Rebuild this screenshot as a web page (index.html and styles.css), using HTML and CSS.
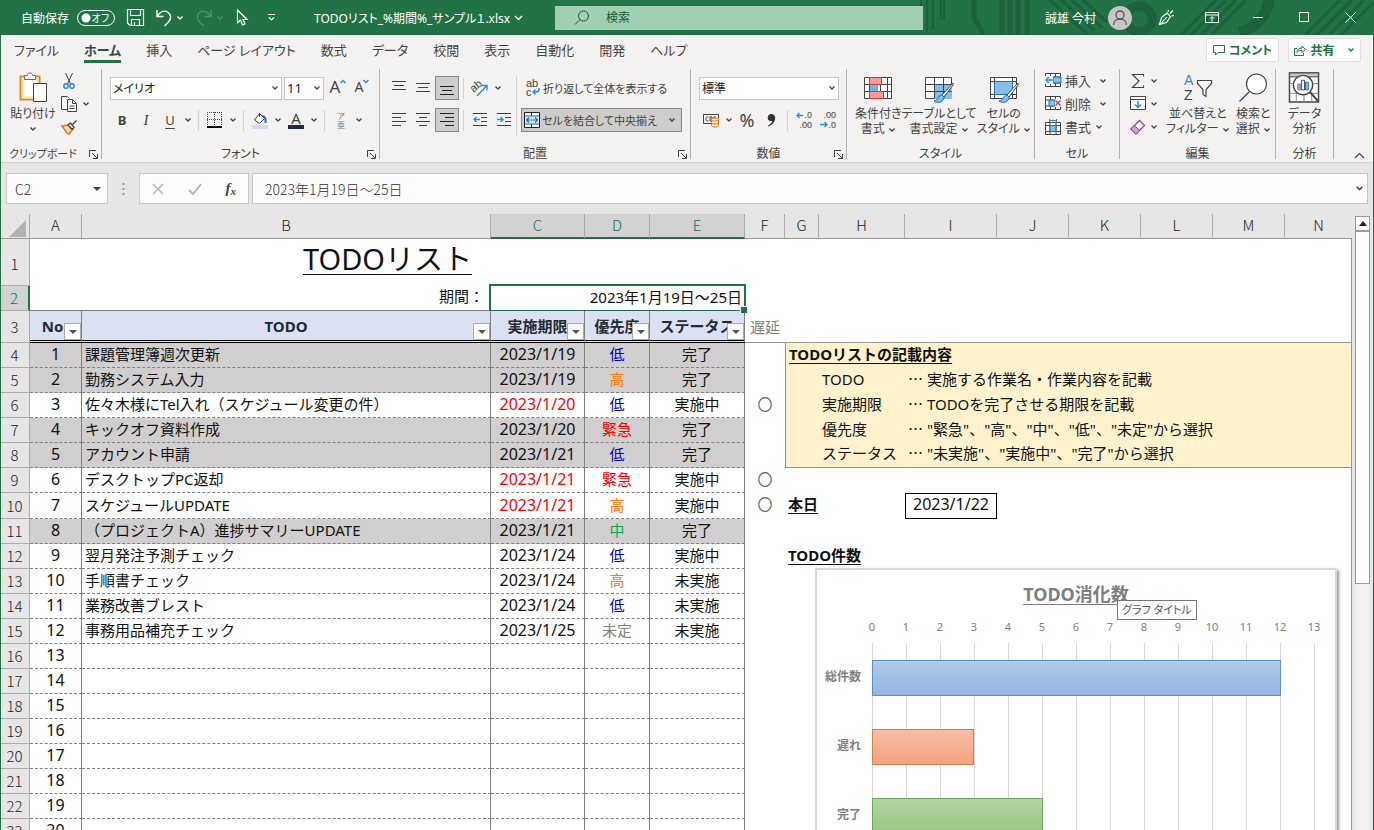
FILE: index.html
```
<!DOCTYPE html>
<html lang="ja">

<head>
    <meta charset="utf-8">
    <title>TODOリスト_%期間%_サンプル１.xlsx</title>
    <meta name="viewport" content="width=device-width, initial-scale=1.0">
    <link rel="stylesheet" href="styles.css">
</head>

<body>
    <!-- shared symbols -->
    <svg class="defs" width="0" height="0">
        <symbol id="chev" viewBox="0 0 8 8"><path d="M1.500 2.500 4 5 6.500 2.500" fill="none" stroke="currentColor" stroke-width="1.3"/></symbol>
        <symbol id="launch" viewBox="0 0 9 9"><path d="M.5 7V.5H7M3 3l5 5M8.500 4v4.500H4" fill="none" stroke="currentColor"/></symbol>
        <symbol id="down" viewBox="0 0 8 8"><path d="M0 2h8L4 6z" fill="currentColor"/></symbol>
    </svg>

    <div class="window">
        <header class="titlebar">
            <svg class="deco" width="454" height="35" viewBox="0 0 454 35">
                <g fill="none" stroke="#1c613b">
                    <path d="M2 0v30M8 0v30M14 0v30M22 0v20M25 0v20" stroke-width="2"/>
                    <path d="M55 0v18l8 14v3M83 0v35M91 0v35M99 0v35M108 0v35" stroke-width="5"/>
                    <path d="M131 0l38 35M142 0l34 31M153 0l30 28M164 0l24 22" stroke-width="3"/>
                    <circle cx="220" cy="19" r="13" stroke-width="9"/>
                    <path d="M262 35l35-35M272 35l35-35M282 35l35-35M292 35l35-35" stroke-width="3"/>
                    <path d="M350 0a38 38 0 0 1-30 32" stroke-width="11"/>
                    <path d="M386 35l35-35M398 35l35-35M410 35l35-35M422 35l32-32" stroke-width="3"/>
                </g>
            </svg>
            <div class="quick">
                <label for="autosave">自動保存</label>
                <span class="switch"><input type="checkbox" id="autosave"><span>オフ</span></span>
                <button class="q-save" aria-label="上書き保存"><svg width="17" height="17" viewBox="0 0 17 17"><path d="M.5.5h16v16H3L.5 14zM3.500.5v6h10v-6M4.500 16.500v-6h8v6M7.500 16v-3" fill="none" stroke="#fff" stroke-width="1.2"/></svg></button>
                <button class="q-undo" aria-label="元に戻す"><svg width="17" height="18" viewBox="0 0 17 18"><path d="M1 1v6.500h6.500M1.500 7C4 3 8 1 11.500 3c4 2.500 4 7 1 10l-4 4" fill="none" stroke="#fff" stroke-width="1.4"/></svg><svg class="chev"><use href="#chev"/></svg></button>
                <button class="q-redo" aria-label="やり直し"><svg width="17" height="18" viewBox="0 0 17 18"><path d="M15 1v6.500H8.500M14.500 7C12 3 8 1 4.500 3c-4 2.500-4 7-1 10l4 4" fill="none" stroke="currentColor" stroke-width="1.4"/></svg><svg class="chev"><use href="#chev"/></svg></button>
                <button class="q-touch" aria-label="タッチ/マウス モード"><svg width="12" height="17" viewBox="0 0 12 17"><path d="M1.500 1v13l3-3 2 5 2.500-1-2-4.500H11z" fill="none" stroke="#fff" stroke-width="1.2"/></svg></button>
                <button aria-label="カスタマイズ"><svg width="9" height="8" viewBox="0 0 9 8"><path d="M1 .5h7M2 3.500l2.500 2.500L7 3.500" fill="none" stroke="#fff" stroke-width="1.2"/></svg></button>
            </div>
            <button class="filename">TODOリスト_%期間%_サンプル１.xlsx <svg width="9" height="8" viewBox="0 0 8 8"><path d="M.5 2 4 5.500 7.500 2" fill="none" stroke="#fff" stroke-width="1.5"/></svg></button>
            <div class="search">
                <svg width="16" height="16" viewBox="0 0 16 16"><circle cx="9.500" cy="6" r="5" fill="none" stroke="#185c37"/><path d="M6 9.500 1 14.500" stroke="#185c37"/></svg>
                <input type="text" aria-label="検索" placeholder="検索">
            </div>
            <div class="account">
                <span>誠雄 今村</span>
                <svg width="24" height="24" viewBox="0 0 24 24"><circle cx="12" cy="12" r="12" fill="#c8c6c4"/><circle cx="12" cy="9" r="4" fill="none" stroke="#555" stroke-width="1.3"/><path d="M5.500 19c0-8 13-8 13 0" fill="none" stroke="#555" stroke-width="1.3"/></svg>
            </div>
            <div class="winbtns">
                <button aria-label="新機能"><svg width="17" height="17" viewBox="0 0 17 17"><path d="M1.500 15.500 3.500 8.500 9 4l3.500 3.500-4 6zM1.500 15.500l2-1.500 2.500.5M3.500 14 9 8M10 3l.5-2M12 4.500l3-3M13.500 7l2.500-.5" fill="none" stroke="#fff" stroke-width="1.1"/></svg></button>
                <button aria-label="リボンの表示オプション"><svg width="14" height="12" viewBox="0 0 14 12"><path d="M.5.5h13v10H.5zM.5 3h13M7 9.500V5M5 6.500l2-2 2 2" fill="none" stroke="#fff"/></svg></button>
                <button aria-label="最小化"><svg width="11" height="11"><path d="M0 5.500h10" stroke="#fff"/></svg></button>
                <button aria-label="最大化"><svg width="11" height="11"><path d="M.5.5h9v9h-9z" fill="none" stroke="#fff"/></svg></button>
                <button aria-label="閉じる"><svg width="11" height="11"><path d="M.5.5l10 10M10.500.5l-10 10" stroke="#fff"/></svg></button>
            </div>
        </header>

        <nav class="tabs">
            <button>ファイル</button>
            <button class="active">ホーム</button>
            <button>挿入</button>
            <button>ページ レイアウト</button>
            <button>数式</button>
            <button>データ</button>
            <button>校閲</button>
            <button>表示</button>
            <button>自動化</button>
            <button>開発</button>
            <button>ヘルプ</button>
            <div class="tab-actions">
                <button class="action"><svg width="12" height="12" viewBox="0 0 12 12"><path d="M.5 1.500h11v7H5L2.500 11V8.500h-2z" fill="none" stroke="#217346"/></svg>コメント</button>
                <button class="action share"><svg width="12" height="12" viewBox="0 0 12 12"><path d="M3 4.500H.5v7h9V9M3 8.500c0-3 2-4.500 5-4.500V2l3.500 3.500L8 8.500v-2c-2 0-4 0-5 2z" fill="none" stroke="#217346"/></svg>共有<svg class="chev"><use href="#chev"/></svg></button>
            </div>
        </nav>

        <section class="ribbon">
            <div class="group g-clip">
                <div class="body low">
                    <button class="big">
                        <svg width="28" height="31" viewBox="0 0 28 31"><path d="M1.500 4.500h19v23h-19z" fill="#fff" stroke="#e08a1e" stroke-width="2"/><path d="M3.500 6.500h15v19h-15z" fill="#fff" stroke="#fbd9a8" stroke-width="2"/><path d="M5.500 7.500V3.500h3c0-3.500 5-3.500 5 0h3v4z" fill="#fff" stroke="#666"/><path d="M14.500 11.500h13v18h-13z" fill="#fff" stroke="#444"/></svg>
                        <span>貼り付け</span>
                        <svg class="chev"><use href="#chev"/></svg>
                    </button>
                    <div class="stack">
                        <button aria-label="切り取り"><svg width="16" height="18" viewBox="0 0 16 18"><path d="M4.500 1l5 11M11.500 1l-5 11" stroke="#444" fill="none"/><circle cx="5" cy="14" r="2.200" fill="none" stroke="#2b88d8" stroke-width="1.400"/><circle cx="11" cy="14" r="2.200" fill="none" stroke="#2b88d8" stroke-width="1.400"/></svg></button>
                        <button aria-label="コピー"><svg width="16" height="16" viewBox="0 0 16 16"><path d="M6 13.500H.5V.5h6l2 2" fill="#fff" stroke="#444"/><path d="M6.500 3.500h5l4 4v8h-9zM11.500 3.500v4h4M8.500 10h5M8.500 12.500h5" fill="#fff" stroke="#444"/></svg><svg class="chev"><use href="#chev"/></svg></button>
                        <button aria-label="書式のコピー"><svg width="17" height="16" viewBox="0 0 17 16"><path d="M1 7l6-1 4 5-3 4-2-1z" fill="#fbdcb5" stroke="#e07a10" stroke-width="1.500"/><path d="M7 6l4.500 4.500L13 8.500 9.500 4zM11 6l4.500-4.500" fill="#fff" stroke="#444" stroke-width="1.300"/></svg></button>
                    </div>
                </div>
                <footer>クリップボード<svg class="launch"><use href="#launch"/></svg></footer>
            </div>

            <div class="group g-font">
                <div class="body rows">
                    <div class="row">
                        <select aria-label="フォント"><option>メイリオ</option></select>
                        <select class="size" aria-label="フォント サイズ"><option>11</option></select>
                        <button class="ic fa" aria-label="フォント サイズの拡大">A<svg width="6" height="5"><path d="M.5 4 3 1.500 5.500 4" fill="none" stroke="#2b88d8" stroke-width="1.300"/></svg></button>
                        <button class="ic fa small" aria-label="フォント サイズの縮小">A<svg width="6" height="5"><path d="M.5 1 3 3.500 5.500 1" fill="none" stroke="#2b88d8" stroke-width="1.300"/></svg></button>
                    </div>
                    <div class="row">
                        <button class="ic bold">B</button>
                        <button class="ic ital">I</button>
                        <button class="ic under">U</button>
                        <button class="drop" aria-label="下線"><svg class="chev"><use href="#chev"/></svg></button>
                        <i class="sep"></i>
                        <button class="ic" aria-label="罫線"><svg width="16" height="16" viewBox="0 0 16 16"><path d="M0 .5h16M0 7.500h16M.5 0v15M7.500 0v15M14.500 0v15" stroke="#444" stroke-dasharray="1 1"/><path d="M0 15h15" stroke="#000" stroke-width="2"/></svg></button>
                        <button class="drop" aria-label="罫線の種類"><svg class="chev"><use href="#chev"/></svg></button>
                        <i class="sep"></i>
                        <button class="ic" aria-label="塗りつぶしの色"><svg width="17" height="17" viewBox="0 0 17 17"><path d="M7.500 1.500l5 5-5 5-5-3.500zM7.500 1v4" fill="#fff" stroke="#444"/><path d="M10 4c3 0 4 3 3.500 7" fill="none" stroke="#1e6fb8" stroke-width="2"/><path d="M0 13h16v4H0z" fill="#cfdcec"/></svg></button>
                        <button class="drop" aria-label="塗りつぶしの色を選択"><svg class="chev"><use href="#chev"/></svg></button>
                        <button class="ic color" aria-label="フォントの色">A</button>
                        <button class="drop" aria-label="フォントの色を選択"><svg class="chev"><use href="#chev"/></svg></button>
                        <i class="sep"></i>
                        <button class="ic ruby" aria-label="ふりがな"><span>ア</span><span>亜</span></button>
                        <button class="drop" aria-label="ふりがなの設定"><svg class="chev"><use href="#chev"/></svg></button>
                    </div>
                </div>
                <footer>フォント<svg class="launch"><use href="#launch"/></svg></footer>
            </div>

            <div class="group g-align">
                <div class="body">
                    <div class="rows aligns">
                        <div class="row">
                            <button class="ic" aria-label="上揃え"><svg width="15" height="16"><path d="M0 1.500h14M2 5.500h10M0 9.500h14" stroke="#444"/></svg></button>
                            <button class="ic" aria-label="上下中央揃え"><svg width="15" height="16"><path d="M0 3.500h14M2 7.500h10M0 11.500h14" stroke="#444"/></svg></button>
                            <button class="ic on" aria-label="下揃え"><svg width="15" height="16"><path d="M0 6.500h14M2 10.500h10M0 14.500h14" stroke="#222"/></svg></button>
                            <i class="sep"></i>
                            <button class="ic" aria-label="方向"><svg width="18" height="17" viewBox="0 0 18 17"><text x="0" y="10" font-size="11" transform="rotate(-40 5 8)" fill="#444">ab</text><path d="M6 16 15.500 6M11 5.500h5v5" fill="none" stroke="#2b88d8" stroke-width="1.400"/></svg></button>
                            <button class="drop" aria-label="方向の種類"><svg class="chev"><use href="#chev"/></svg></button>
                        </div>
                        <div class="row">
                            <button class="ic" aria-label="左揃え"><svg width="15" height="16"><path d="M0 1.500h14M0 5.500h9M0 9.500h14M0 13.500h9" stroke="#444"/></svg></button>
                            <button class="ic" aria-label="中央揃え"><svg width="15" height="16"><path d="M0 1.500h14M3 5.500h8M0 9.500h14M3 13.500h8" stroke="#444"/></svg></button>
                            <button class="ic on" aria-label="右揃え"><svg width="15" height="16"><path d="M0 1.500h14M5 5.500h9M0 9.500h14M5 13.500h9" stroke="#222"/></svg></button>
                            <i class="sep"></i>
                            <button class="ic" aria-label="インデントを減らす"><svg width="15" height="16"><path d="M0 1.500h14M8 5.500h6M8 9.500h6M0 13.500h14" stroke="#444"/><path d="M7 7.500H1M3.500 5 1 7.500 3.500 10" fill="none" stroke="#2b88d8" stroke-width="1.300"/></svg></button>
                            <button class="ic" aria-label="インデントを増やす"><svg width="15" height="16"><path d="M0 1.500h14M8 5.500h6M8 9.500h6M0 13.500h14" stroke="#444"/><path d="M0 7.500h6M3.500 5 6 7.500 3.500 10" fill="none" stroke="#2b88d8" stroke-width="1.300"/></svg></button>
                        </div>
                    </div>
                    <i class="sep tall"></i>
                    <div class="rows">
                        <button class="wide"><svg width="15" height="18" viewBox="0 0 15 18"><text x="0" y="8" font-size="11" fill="#444">ab</text><text x="0" y="17" font-size="11" fill="#444">c</text><path d="M13 9v2c0 2-2 2-6 2M9.500 10.500 7 13l2.500 2.500" fill="none" stroke="#2b88d8" stroke-width="1.400"/></svg>折り返して全体を表示する</button>
                        <button class="wide on"><svg width="16" height="16" viewBox="0 0 16 16"><path d="M.5.5h15v15H.5zM7.500.5v4M7.500 11.500v4" fill="#fff" stroke="#222"/><path d="M1 4h14v8H1z" fill="#d6e9fa"/><path d="M.5 4h15M.5 12h15M2.500 8h11M5 5.500 2.500 8 5 10.500M11 5.500 13.500 8 11 10.500" fill="none" stroke="#1e6fb8" stroke-width="1.200"/></svg>セルを結合して中央揃え<svg class="chev"><use href="#chev"/></svg></button>
                    </div>
                </div>
                <footer>配置<svg class="launch"><use href="#launch"/></svg></footer>
            </div>

            <div class="group g-num">
                <div class="body rows">
                    <div class="row"><select aria-label="表示形式"><option>標準</option></select></div>
                    <div class="row">
                        <button class="ic" aria-label="通貨表示形式"><svg width="17" height="16" viewBox="0 0 17 16"><path d="M9 11.500H.5v-9h15V6" fill="none" stroke="#444"/><path d="M5.500 5C2 4 2 10 5.500 9M7 5v4h2V5zM11 9V5h2" fill="none" stroke="#444"/><path d="M8.500 7.500c0-2 7-2 7 0v6c0 2-7 2-7 0z" fill="#fbe3c6" stroke="#e07a10"/><path d="M8.500 7.500c0 2 7 2 7 0M8.500 10.500c0 2 7 2 7 0" fill="none" stroke="#e07a10"/></svg></button>
                        <button class="drop" aria-label="通貨の種類"><svg class="chev"><use href="#chev"/></svg></button>
                        <button class="ic pct">%</button>
                        <button class="ic comma" aria-label="桁区切りスタイル"><svg width="9" height="13" viewBox="0 0 9 13"><path d="M4 0c6 0 6 9-2.500 12.500L1 11.500c3-1.500 4-3 4-4.500C-1 8 0 0 4 0z" fill="#333"/></svg></button>
                        <i class="sep"></i>
                        <button class="ic" aria-label="小数点以下の表示桁数を増やす"><svg width="17" height="18" viewBox="0 0 17 18"><text x="16" y="7" font-size="9" text-anchor="end" fill="#444">.0</text><text x="16" y="17" font-size="9" text-anchor="end" fill="#444">.00</text><path d="M7 4.500H1M3.500 2 1 4.500 3.500 7" fill="none" stroke="#2b88d8" stroke-width="1.300"/></svg></button>
                        <button class="ic" aria-label="小数点以下の表示桁数を減らす"><svg width="17" height="18" viewBox="0 0 17 18"><text x="16" y="7" font-size="9" text-anchor="end" fill="#444">.00</text><text x="16" y="17" font-size="9" text-anchor="end" fill="#444">.0</text><path d="M0 13.500h7M4.500 11 7 13.500 4.500 16" fill="none" stroke="#2b88d8" stroke-width="1.300"/></svg></button>
                    </div>
                </div>
                <footer>数値<svg class="launch"><use href="#launch"/></svg></footer>
            </div>

            <div class="group g-style">
                <div class="body low">
                    <button class="big">
                        <svg width="30" height="31" viewBox="0 0 30 31"><path d="M1.500 5.500h27v21h-27zM1.500 12.500h27M1.500 19.500h27M6.500 5.500v21M24.500 5.500v21M17.500 5.500v21" fill="#fff" stroke="#444"/><path d="M6.500 5.500h12v7h-12zM6.500 19.500h14v7h-14z" fill="#ff9a9a" stroke="#e03030"/><path d="M7 13h8v6H7z" fill="#6cb4ee"/></svg>
                        <span>条件付き<br>書式 <svg class="chev"><use href="#chev"/></svg></span>
                    </button>
                    <button class="big">
                        <svg width="30" height="31" viewBox="0 0 30 31"><path d="M1.500 5.500h26v21h-26z" fill="#fff" stroke="#444"/><path d="M10 12h18v15H10z" fill="#83beec"/><path d="M1.500 12.500h26M1.500 19.500h26M10.500 5.500v21M19.500 5.500v21" stroke="#444"/><path d="M29 11 18 23l2 2 9-12z" fill="#fff" stroke="#444"/><path d="M18 23c-4 0-3 5-8 6 4 3 10 1 10-4z" fill="#83beec" stroke="#1e6fb8"/></svg>
                        <span>テーブルとして<br>書式設定 <svg class="chev"><use href="#chev"/></svg></span>
                    </button>
                    <button class="big">
                        <svg width="30" height="31" viewBox="0 0 30 31"><path d="M1.500 5.500h26v21h-26zM1.500 9.500h26M5.500 5.500v21M23.500 5.500v21M1.500 22.500h26" fill="#fff" stroke="#444"/><path d="M5.500 9.500h18v13h-18z" fill="#83beec" stroke="#1e6fb8"/><path d="M29 11 18 23l2 2 9-12z" fill="#fff" stroke="#444"/><path d="M18 23c-4 0-3 5-8 6 4 3 10 1 10-4z" fill="#83beec" stroke="#1e6fb8"/></svg>
                        <span>セルの<br>スタイル <svg class="chev"><use href="#chev"/></svg></span>
                    </button>
                </div>
                <footer>スタイル</footer>
            </div>

            <div class="group g-cell">
                <div class="body low">
                    <div class="stack">
                        <button><svg width="16" height="15" viewBox="0 0 16 15"><path d="M.5.5h15v13H.5zM.5 4h15M.5 10h15M5.500 0v14M10.500 0v14" fill="#fff" stroke="#444"/><path d="M8 4h8v6H8z" fill="#83beec" stroke="#1e6fb8"/><path d="M0 3h8v8H0z" fill="#f3f2f1"/><path d="M8 7H1M4 4 1 7l3 3" fill="none" stroke="#2b88d8" stroke-width="1.300"/></svg>挿入<svg class="chev far"><use href="#chev"/></svg></button>
                        <button><svg width="16" height="15" viewBox="0 0 16 15"><path d="M.5.5h15v13H.5zM.5 4h15M.5 10h15M5.500 0v14M10.500 0v14" fill="#fff" stroke="#444"/><path d="M4 4h6v6H4z" fill="#83beec" stroke="#1e6fb8"/><path d="M10 3h6v8h-6z" fill="#f3f2f1"/><path d="M10.500 4.500l5 5M15.500 4.500l-5 5" stroke="#e03030" stroke-width="1.300"/></svg>削除<svg class="chev far"><use href="#chev"/></svg></button>
                        <button><svg width="16" height="16" viewBox="0 0 16 16"><path d="M.5 3.500h15v12H.5zM.5 6.500h15M.5 12.500h15M5 3v12M11 3v12" fill="#fff" stroke="#444"/><path d="M5 6.500h6v6H5z" fill="#83beec" stroke="#1e6fb8"/><path d="M4.500 1.500h7M4.500 0v3M11.500 0v3" stroke="#2b88d8"/></svg>書式<svg class="chev"><use href="#chev"/></svg></button>
                    </div>
                </div>
                <footer>セル</footer>
            </div>

            <div class="group g-edit">
                <div class="body low">
                    <div class="stack">
                        <button aria-label="オート SUM"><svg width="16" height="16" viewBox="0 0 16 16"><path d="M13.500 3.500v-2h-11L9 8l-6.500 6.500h11v-2" fill="none" stroke="#444" stroke-width="1.200"/></svg><svg class="chev"><use href="#chev"/></svg></button>
                        <button aria-label="フィル"><svg width="16" height="15" viewBox="0 0 16 15"><path d="M.5.5h15v13H.5zM.5 3.500h15" fill="#fff" stroke="#444"/><path d="M8 5v6.500M5 8.500l3 3 3-3" fill="none" stroke="#2b88d8" stroke-width="1.400"/></svg><svg class="chev"><use href="#chev"/></svg></button>
                        <button aria-label="クリア"><svg width="16" height="16" viewBox="0 0 16 16"><path d="M1 10 9.500 1.500l5 5L6 15z" fill="#fff" stroke="#9b3fa8" stroke-width="1.300"/><path d="M1 10l3.500-3.500 5 5L6 15z" fill="#d79be0" stroke="#9b3fa8"/></svg><svg class="chev"><use href="#chev"/></svg></button>
                    </div>
                    <button class="big">
                        <svg width="30" height="31" viewBox="0 0 30 31"><text x="1" y="13" font-size="14" fill="#2b88d8">A</text><text x="1" y="28" font-size="14" fill="#444">Z</text><path d="M14.500 8.500h14v3l-5.500 6v7l-3-2v-5l-5.500-6z" fill="#fff" stroke="#444" stroke-width="1.200"/></svg>
                        <span>並べ替えと<br>フィルター <svg class="chev"><use href="#chev"/></svg></span>
                    </button>
                    <button class="big">
                        <svg width="30" height="31" viewBox="0 0 30 31"><circle cx="18.500" cy="12" r="10" fill="#fff" stroke="#444" stroke-width="1.200"/><path d="M11.500 19.500 1.500 29.500" stroke="#444" stroke-width="1.300"/></svg>
                        <span>検索と<br>選択 <svg class="chev"><use href="#chev"/></svg></span>
                    </button>
                </div>
                <footer>編集</footer>
            </div>

            <div class="group g-ana">
                <div class="body low">
                    <button class="big">
                        <svg width="32" height="31" viewBox="0 0 32 32"><path d="M1 1h30v30H1z" fill="#fff" stroke="#444" stroke-width="1.500"/><path d="M1 1h30v4H1z" fill="#c8c6c4" stroke="#444"/><path d="M1 12h30M1 22h30M8 22v9M16 22v9M24 22v9" stroke="#888"/><circle cx="15" cy="13.500" r="10" fill="#fff" stroke="#444" stroke-width="1.500"/><path d="M22.500 21l8 9" stroke="#444" stroke-width="2"/><path d="M9.500 12.500h3v6h-3z" fill="#aaa" stroke="#888"/><path d="M13.500 8.500h3v10h-3z" fill="#fff" stroke="#444"/><path d="M17.500 10.500h3v8h-3z" fill="#83beec" stroke="#1e6fb8"/></svg>
                        <span>データ<br>分析</span>
                    </button>
                </div>
                <footer>分析</footer>
            </div>
            <button class="collapse" aria-label="リボンを折りたたむ"><svg width="11" height="7" viewBox="0 0 11 7"><path d="M1 6l4.500-4.500L10 6" fill="none" stroke="#444" stroke-width="1.200"/></svg></button>
        </section>

        <section class="formulabar">
            <div class="namebox"><input type="text" value="C2" aria-label="名前ボックス"><svg width="8" height="8"><use href="#down"/></svg></div>
            <svg class="grip" width="3" height="12"><path d="M1.500 0v12" stroke="#999" stroke-width="2" stroke-dasharray="2 3"/></svg>
            <div class="fx">
                <button aria-label="キャンセル"><svg width="12" height="12"><path d="M1 1l10 10M11 1 1 11" stroke="#b5b5b5" stroke-width="1.500"/></svg></button>
                <button aria-label="入力"><svg width="14" height="12"><path d="M1 7l4 4 8-10" fill="none" stroke="#b5b5b5" stroke-width="2"/></svg></button>
                <button class="fn" aria-label="関数の挿入">f<small>x</small></button>
            </div>
            <div class="formula"><input type="text" value="2023年1月19日～25日" aria-label="数式バー"><svg width="9" height="9"><use href="#chev"/></svg></div>
        </section>

        <main class="workarea">
            <div class="sheet">
                <table>
                    <colgroup>
                        <col class="c-row"><col class="c-a"><col class="c-b"><col class="c-c"><col class="c-d"><col class="c-e"><col class="c-f"><col class="c-g"><col class="c-h"><col class="c-i"><col class="c-j"><col class="c-j"><col class="c-j"><col class="c-j"><col>
                    </colgroup>
                    <thead>
                        <tr>
                            <th class="corner"><svg width="18" height="17"><path d="M17 0v17H0z" fill="#b2b2b2"/></svg></th>
                            <th>A</th><th>B</th><th class="sel">C</th><th class="sel">D</th><th class="sel">E</th><th>F</th><th>G</th><th>H</th><th>I</th><th>J</th><th>K</th><th>L</th><th>M</th><th>N</th>
                        </tr>
                    </thead>
                    <tbody class="top">
                        <tr class="r1"><th>1</th><td colspan="5" class="title">TODOリスト</td><td colspan="9"></td></tr>
                        <tr class="r2"><th class="sel">2</th><td></td><td class="period">期間：</td><td colspan="3" class="selected">2023年1月19日～25日</td><td colspan="9"></td></tr>
                        <tr class="r3">
                            <th>3</th>
                            <td class="no">No<button class="filter" aria-label="No フィルター"><svg width="8" height="8"><use href="#down"/></svg></button></td>
                            <td>TODO<button class="filter" aria-label="TODO フィルター"><svg width="8" height="8"><use href="#down"/></svg></button></td>
                            <td>実施期限<button class="filter" aria-label="実施期限 フィルター"><svg width="8" height="8"><use href="#down"/></svg></button></td>
                            <td>優先度<button class="filter" aria-label="優先度 フィルター"><svg width="8" height="8"><use href="#down"/></svg></button></td>
                            <td>ステータス<button class="filter" aria-label="ステータス フィルター"><svg width="8" height="8"><use href="#down"/></svg></button></td>
                            <td class="late">遅延</td><td colspan="8" class="late"></td>
                        </tr>
                    </tbody>
                    <tbody class="list">
                        <tr class="done"><th>4</th><td>1</td><td>課題管理簿週次更新</td><td>2023/1/19</td><td class="low">低</td><td>完了</td><td></td><td colspan="8" class="note first"><b class="head">TODOリストの記載内容</b></td></tr>
                        <tr class="done"><th>5</th><td>2</td><td>勤務システム入力</td><td>2023/1/19</td><td class="high">高</td><td>完了</td><td></td><td class="note first"></td><td class="note">TODO</td><td colspan="6" class="note"><span class="dots">…</span> 実施する作業名・作業内容を記載</td></tr>
                        <tr><th>6</th><td>3</td><td>佐々木様にTel入れ（スケジュール変更の件）</td><td class="over">2023/1/20</td><td class="low">低</td><td>実施中</td><td>〇</td><td class="note first"></td><td class="note">実施期限</td><td colspan="6" class="note"><span class="dots">…</span> TODOを完了させる期限を記載</td></tr>
                        <tr class="done"><th>7</th><td>4</td><td>キックオフ資料作成</td><td>2023/1/20</td><td class="urgent">緊急</td><td>完了</td><td></td><td class="note first"></td><td class="note">優先度</td><td colspan="6" class="note"><span class="dots">…</span> "緊急"、"高"、"中"、"低"、"未定"から選択</td></tr>
                        <tr class="done"><th>8</th><td>5</td><td>アカウント申請</td><td>2023/1/21</td><td class="low">低</td><td>完了</td><td></td><td class="note first last"></td><td class="note last">ステータス</td><td colspan="6" class="note last"><span class="dots">…</span> "未実施"、"実施中"、"完了"から選択</td></tr>
                        <tr><th>9</th><td>6</td><td>デスクトップPC返却</td><td class="over">2023/1/21</td><td class="urgent">緊急</td><td>実施中</td><td>〇</td><td colspan="8"></td></tr>
                        <tr><th>10</th><td>7</td><td>スケジュールUPDATE</td><td class="over">2023/1/21</td><td class="high">高</td><td>実施中</td><td>〇</td><td colspan="2"><b class="head">本日</b></td><td class="today">2023/1/22</td><td colspan="5"></td></tr>
                        <tr class="done"><th>11</th><td>8</td><td>（プロジェクトA）進捗サマリーUPDATE</td><td>2023/1/21</td><td class="mid">中</td><td>完了</td><td></td><td colspan="8"></td></tr>
                        <tr><th>12</th><td>9</td><td>翌月発注予測チェック</td><td>2023/1/24</td><td class="low">低</td><td>実施中</td><td></td><td colspan="8"><b class="head">TODO件数</b></td></tr>
                        <tr><th>13</th><td>10</td><td>手順書チェック</td><td>2023/1/24</td><td class="high">高</td><td>未実施</td><td></td><td colspan="8"></td></tr>
                        <tr><th>14</th><td>11</td><td>業務改善ブレスト</td><td>2023/1/24</td><td class="low">低</td><td>未実施</td><td></td><td colspan="8"></td></tr>
                        <tr><th>15</th><td>12</td><td>事務用品補充チェック</td><td>2023/1/25</td><td class="undecided">未定</td><td>未実施</td><td></td><td colspan="8"></td></tr>
                        <tr><th>16</th><td>13</td><td></td><td></td><td></td><td></td><td></td><td colspan="8"></td></tr>
                        <tr><th>17</th><td>14</td><td></td><td></td><td></td><td></td><td></td><td colspan="8"></td></tr>
                        <tr><th>18</th><td>15</td><td></td><td></td><td></td><td></td><td></td><td colspan="8"></td></tr>
                        <tr><th>19</th><td>16</td><td></td><td></td><td></td><td></td><td></td><td colspan="8"></td></tr>
                        <tr><th>20</th><td>17</td><td></td><td></td><td></td><td></td><td></td><td colspan="8"></td></tr>
                        <tr><th>21</th><td>18</td><td></td><td></td><td></td><td></td><td></td><td colspan="8"></td></tr>
                        <tr><th>22</th><td>19</td><td></td><td></td><td></td><td></td><td></td><td colspan="8"></td></tr>
                        <tr><th>23</th><td>20</td><td></td><td></td><td></td><td></td><td></td><td colspan="8"></td></tr>
                    </tbody>
                </table>

                <!-- floating chart object -->
                <div class="chart">
                    <h2>TODO消化数</h2>
                    <div class="tip">グラフ タイトル</div>
                    <div class="axis"><span>0</span><span>1</span><span>2</span><span>3</span><span>4</span><span>5</span><span>6</span><span>7</span><span>8</span><span>9</span><span>10</span><span>11</span><span>12</span><span>13</span></div>
                    <div class="plot">
                        <div class="cats"><span>総件数</span><span>遅れ</span><span>完了</span></div>
                        <div class="bars">
                            <div class="slot"><div class="bar total" style="width: 92.3%"></div></div>
                            <div class="slot"><div class="bar delayed" style="width: 23.1%"></div></div>
                            <div class="slot"><div class="bar finished" style="width: 38.5%"></div></div>
                        </div>
                    </div>
                </div>
            </div>
            <div class="vscroll">
                <button aria-label="上へスクロール"><svg width="8" height="8"><path d="M0 6h8L4 1z" fill="#222"/></svg></button>
                <div class="track"><div class="thumb"></div></div>
            </div>
        </main>
    </div>
</body>

</html>
```

FILE: styles.css
```
* {
    box-sizing: border-box;
}

html,
body {
    margin: 0;
    height: 100%;
    overflow: hidden;
    font-family: "Noto Sans", "Noto Sans CJK JP", sans-serif;
    color: #444;
}

button {
    display: flex;
    align-items: center;
    justify-content: center;
    margin: 0;
    padding: 0;
    border: 0;
    background: none;
    color: inherit;
    font: inherit;
    font-feature-settings: inherit;
    white-space: nowrap;
}

input,
select {
    min-width: 0;
    margin: 0;
    border: 0;
    outline: 0;
    background: none;
    color: inherit;
    font: inherit;
    font-feature-settings: inherit;
}

svg {
    flex: none;
    overflow: visible;
}

svg text {
    font-family: "Liberation Sans", sans-serif;
}

.defs {
    position: absolute;
}

.chev {
    width: 8px;
    height: 8px;
}

.window {
    display: flex;
    flex-direction: column;
    height: 100vh;
    border: solid #217346;
    border-width: 0 1px;
    background: #e6e6e6;
}

/* title bar */
.titlebar {
    position: relative;
    display: flex;
    align-items: center;
    flex: none;
    height: 35px;
    background: #217346;
    color: #fff;
    font-size: 12px;
    font-feature-settings: "palt";
}

.deco {
    position: absolute;
    right: 0;
    top: 0;
    overflow: hidden;
}

.quick {
    display: flex;
    align-items: center;
    width: 313px;
    padding-left: 20px;
}

.switch {
    position: relative;
    margin: 0 12px 0 8px;
    height: 16px;
}

.switch input {
    display: block;
    appearance: none;
    width: 38px;
    height: 16px;
    border: 1px solid #fff;
    border-radius: 8px;
    background: radial-gradient(circle at 8px 7px, #fff 4px, transparent 5px);
}

.switch span {
    position: absolute;
    right: 6px;
    top: 0;
    font-size: 10px;
    line-height: 16px;
}

.q-save {
    margin-right: 12px;
}

.q-undo,
.q-redo {
    gap: 3px;
    margin-right: 12px;
}

.q-redo {
    color: #4d9069;
}

.q-touch {
    margin-right: 19px;
}

.filename {
    justify-content: flex-start;
    gap: 4px;
    width: 241px;
    font-size: 12px;
}

.search {
    position: relative;
    display: flex;
    align-items: center;
    gap: 14px;
    width: 368px;
    height: 24px;
    padding-left: 19px;
    background: #a0cfb4;
}

.search input::placeholder {
    color: #185c37;
    opacity: 1;
}

.account {
    position: relative;
    display: flex;
    align-items: center;
    gap: 12px;
    margin-left: auto;
    font-size: 12px;
}

.winbtns {
    position: relative;
    display: flex;
    margin-left: 11px;
}

.winbtns button {
    width: 46px;
    height: 35px;
}

/* ribbon tabs */
.tabs {
    display: flex;
    flex: none;
    gap: 25px;
    height: 31px;
    padding-left: 13px;
    background: #f3f2f1;
    font-size: 13px;
    font-feature-settings: "palt";
}

.tabs > button {
    height: 28px;
    border-bottom: 3px solid transparent;
    padding-top: 4px;
}

.tabs .active {
    border-color: #217346;
    font-weight: bold;
}

.tab-actions {
    display: flex;
    gap: 9px;
    margin: 3px 12px 0 auto;
}

.action {
    gap: 4px;
    width: 73px;
    height: 24px;
    border: 1px solid #e1dfdd;
    border-radius: 2px;
    background: #fff;
    color: #217346;
    font-size: 12px;
    font-weight: bold;
}

.share .chev {
    margin-left: 8px;
}

/* ribbon */
.ribbon {
    position: relative;
    display: flex;
    flex: none;
    height: 97px;
    padding-top: 3px;
    border-bottom: 1px solid #d2d0ce;
    background: #f3f2f1;
    font-size: 12px;
    font-feature-settings: "palt";
}

.group {
    display: flex;
    flex-direction: column;
    flex: none;
    height: 90px;
    border-right: 1px solid #b5b3b1;
}

.g-clip { width: 101px; }
.g-font { width: 278px; }
.g-align { width: 311px; }
.g-num { width: 156px; }
.g-style { width: 188px; }
.g-cell { width: 85px; }
.g-edit { width: 156px; }
.g-ana { width: 58px; }

.group .body {
    display: flex;
    flex: 1;
    padding: 7px 0 0 8px;
}

.group .low {
    padding-top: 0;
}

.group footer {
    position: relative;
    height: 13px;
    font-size: 12px;
    line-height: 16px;
    text-align: center;
}

.g-clip footer {
    padding-right: 16px;
    font-size: 11px;
}

.launch {
    position: absolute;
    right: 3px;
    top: 4px;
    width: 9px;
    height: 9px;
}

.rows,
.group .rows {
    display: flex;
    flex: none;
    flex-direction: column;
    gap: 8px;
}

.group .rows.body {
    flex: 1;
}

.row {
    display: flex;
    align-items: center;
    height: 24px;
}

.ic {
    width: 24px;
    height: 24px;
}

.drop {
    width: 12px;
    height: 24px;
}

.on {
    border: 1px solid #8a8886;
    background: #cfcdcb;
}

.sep {
    width: 1px;
    height: 21px;
    margin: 0 4px;
    background: #d2d0ce;
}

.tall {
    height: 60px;
    margin: 0 4px 0 0;
}

select {
    appearance: none;
    width: 172px;
    height: 23px;
    padding: 0 2px;
    border: 1px solid #c8c6c4;
    border-radius: 0;
    background: #fff url("data:image/svg+xml,%3Csvg xmlns='http://www.w3.org/2000/svg' width='8' height='8'%3E%3Cpath d='M1.5 2.5 4 5 6.5 2.5' fill='none' stroke='%23444' stroke-width='1.3'/%3E%3C/svg%3E") no-repeat right 2px center;
    color: #222;
}

select.size {
    width: 40px;
    margin: 0 2px;
    font-size: 13px;
}

.g-num select {
    width: 140px;
}

.stack {
    display: flex;
    flex-direction: column;
}

.stack button {
    justify-content: flex-start;
    gap: 4px;
    height: 23px;
}

.g-clip .stack {
    margin-left: 4px;
}

.g-clip .stack button {
    gap: 5px;
}

.big {
    flex-direction: column;
    justify-content: flex-start;
    line-height: 15px;
    padding-top: 3px;
}

.big > svg:first-child {
    margin-bottom: 3px;
}

.big .chev {
    vertical-align: middle;
}

.big > .chev {
    margin-top: 4px;
}

.g-clip .big {
    width: 48px;
}

.fa {
    align-items: flex-start;
    font-size: 17px;
    line-height: 21px;
}

.fa.small {
    font-size: 14px;
}

.fa svg {
    margin-top: 3px;
}

.bold {
    font-size: 13px;
    font-weight: bold;
}

.ital {
    font-family: "Liberation Serif", serif;
    font-size: 15px;
    font-style: italic;
}

.under {
    font-size: 13px;
    text-decoration: underline;
    text-underline-offset: 3px;
}

.color {
    height: 18px;
    width: 16px;
    margin: 0 4px;
    border-bottom: 4px solid #222b3a;
    font-size: 15px;
    line-height: 14px;
}

.ruby {
    flex-direction: column;
    font-size: 8px;
    line-height: 9px;
    color: #777;
}

.aligns {
    width: 129px;
}

.g-align .body {
    padding-left: 7px;
}

.wide {
    align-self: flex-start;
    gap: 2px;
    height: 24px;
    padding-left: 5px;
    font-size: 11px;
}

.wide.on {
    width: 161px;
    justify-content: flex-start;
    padding-left: 2px;
}

.wide .chev {
    margin: 0 5px 0 auto;
}

.pct {
    font-size: 18px;
}

.g-style .body {
    justify-content: space-between;
    padding: 0 8px;
}

.g-cell .body {
    padding-left: 10px;
    font-size: 13px;
}

.g-cell .far {
    margin-left: 4px;
}

.g-edit .body {
    padding-left: 10px;
}

.g-edit .stack {
    margin-right: 8px;
}

.g-edit .big {
    margin-right: 6px;
}

.g-ana .body {
    justify-content: center;
    padding-left: 0;
}

.collapse {
    position: absolute;
    right: 8px;
    bottom: 3px;
}

/* formula bar */
.formulabar {
    display: flex;
    align-items: center;
    flex: none;
    height: 51px;
    padding: 0 5px;
    font-family: "Noto Sans CJK JP", sans-serif;
    font-size: 14px;
    font-weight: 300;
}

.namebox,
.fx,
.formula {
    display: flex;
    align-items: center;
    height: 31px;
    border: 1px solid #c6c6c6;
    background: #fdfdfd;
}

.namebox {
    width: 102px;
    padding: 0 6px;
}

.namebox input,
.formula input {
    flex: 1;
    color: #333;
}

.grip {
    margin: 0 14px;
}

.fx {
    width: 110px;
    justify-content: space-around;
    margin-right: 3px;
}

.fn {
    font: italic bold 15px "Liberation Serif", serif;
}

.fn small {
    font-size: 11px;
    align-self: flex-end;
}

.formula {
    flex: 1;
    padding: 0 3px 0 10px;
}

/* work area */
.workarea {
    display: flex;
    flex: 1;
    min-height: 0;
}

.sheet {
    position: relative;
    flex: 1;
    min-width: 0;
    overflow: hidden;
    background: linear-gradient(#e6e6e6 24px, #fff 24px);
}

.sheet table {
    width: 100%;
    table-layout: fixed;
    border-collapse: separate;
    border-spacing: 0;
    font-size: 15px;
    line-height: 20px;
    color: #111;
}

.c-row { width: 29px; }
.c-a { width: 52px; }
.c-b { width: 409px; }
.c-c { width: 94px; }
.c-d { width: 65px; }
.c-e { width: 95px; }
.c-f { width: 40px; }
.c-g { width: 34px; }
.c-h { width: 86px; }
.c-i { width: 92px; }
.c-j { width: 72px; }

.sheet th {
    padding: 0;
    border: solid #ababab;
    border-width: 0 1px 1px 0;
    background: #e6e6e6;
    color: #222;
    font-family: "Noto Sans CJK JP", sans-serif;
    font-weight: 300;
}

.sheet td {
    padding: 0 3px 2px;
    overflow: hidden;
    white-space: nowrap;
}

.sheet thead th {
    height: 25px;
    padding-bottom: 2px;
    border-bottom-color: #999;
}

.sheet thead th:last-child {
    border-right: 0;
}

.sheet th.corner {
    padding: 4px 3px 0 8px;
    line-height: 0;
}

.sheet thead th.sel {
    border-bottom: 2px solid #217346;
}

.sheet th.sel {
    background: #d2d2d2;
    color: #217346;
}

.sheet tbody th {
    padding-right: 1px;
}

.sheet tbody th.sel {
    border-right: 2px solid #217346;
}

.sheet tr > :last-child {
    border-right: 1px solid #999;
}

.sheet .r1 > * {
    height: 47px;
}

.sheet .r1 th {
    padding-top: 4px;
}

.sheet .r2 > * {
    height: 25px;
}

.sheet .r2 td {
    padding-bottom: 4px;
    line-height: 18px;
}

.sheet .r3 > * {
    height: 32px;
}

.sheet .title {
    padding-bottom: 8px;
    font-size: 29px;
    line-height: 34px;
    text-align: center;
    text-decoration: underline;
    text-decoration-thickness: 1px;
    text-underline-offset: 4px;
}

.sheet .period {
    padding-right: 7px;
    text-align: right;
}

.sheet .r2 td:nth-child(-n+3) {
    border-bottom: 1px solid #808080;
}

.sheet .selected {
    position: relative;
    overflow: visible;
    text-align: right;
}

.selected::before {
    content: "";
    position: absolute;
    inset: -2px -1px -1px -2px;
    border: 2px solid #217346;
}

.selected::after {
    content: "";
    position: absolute;
    right: -2px;
    bottom: -2px;
    z-index: 1;
    width: 6px;
    height: 6px;
    border: solid #fff;
    border-width: 1px 0 0 1px;
    background: #217346;
}

.sheet .r3 td {
    position: relative;
    padding-bottom: 0;
    border-right: 1px solid #808080;
    border-bottom: 3px double #000;
    background: #d9e1f2;
    color: #222b35;
    font-weight: bold;
    text-align: center;
}

.sheet .r3 .no {
    padding-right: 9px;
}

.sheet .r3 .late {
    border-right: 0;
    border-bottom: 1px solid #999;
    background: #fff;
    color: #808080;
    font-weight: normal;
}

.sheet .r3 .late:last-child {
    border-right: 1px solid #999;
}

.filter {
    position: absolute;
    right: 0;
    bottom: 0;
    width: 17px;
    height: 17px;
    border: 1px solid #ababab;
    background: #fff;
    color: #555;
}

.list tr > * {
    height: 25px;
}

.list td:nth-child(-n+6) {
    border-right: 1px solid #808080;
    border-bottom: 1px dashed #808080;
    text-align: center;
}

.list td:nth-child(3) {
    text-align: left;
}

.list td:nth-child(2),
.list td:nth-child(4) {
    padding: 0 0 2px;
    font-size: 16px;
}

.list td:nth-child(7) {
    color: #666;
    text-align: center;
}

.list td:nth-child(n+7) {
    padding-bottom: 4px;
}

.list .done td:nth-child(-n+6) {
    background: #d0cece;
}

.list .low { color: #0000c0; }
.list .mid { color: #00b050; }
.list .high { color: #ff7800; }
.list .urgent,
.list .over { color: #ff0000; }
.list .undecided { color: #808080; }

.list .note {
    background: #fff2cc;
}

.list .first {
    border-left: 1px solid #bf9000;
}

.list .last {
    border-bottom: 1px solid #bf9000;
}

.dots {
    font-family: "Noto Sans CJK JP", sans-serif;
}

.head {
    text-decoration: underline;
    text-decoration-thickness: 1px;
    text-underline-offset: 3px;
}

.list .today {
    border: 1px solid #000;
    font-size: 16px;
    text-align: center;
}

/* chart */
.chart {
    position: absolute;
    left: 814px;
    top: 354px;
    width: 522px;
    height: 400px;
    border: 2px solid #d9d9d9;
    background: #fff;
    box-shadow: 2px 2px 3px #999;
    color: #7f7f7f;
}

.chart h2 {
    margin: 10px 0 0;
    font-size: 18px;
    line-height: 28px;
    text-align: center;
    text-decoration: underline;
    text-decoration-thickness: 1px;
    text-underline-offset: 3px;
}

.tip {
    position: absolute;
    left: 300px;
    top: 30px;
    padding: 0 4px;
    border: 1px solid #767676;
    background: #fff;
    color: #555;
    font-size: 11px;
    line-height: 18px;
    font-feature-settings: "palt";
}

.axis {
    display: flex;
    margin: 11px 0 0 38px;
    font-size: 11px;
    line-height: 16px;
}

.axis span {
    width: 34px;
    text-align: center;
}

.plot {
    display: flex;
    gap: 11px;
    height: 330px;
    margin-top: 8px;
}

.cats {
    width: 44px;
    font-size: 12px;
    font-weight: bold;
    line-height: 68px;
    text-align: right;
}

.cats span {
    display: block;
    height: 69px;
}

.bars {
    width: 443px;
    background: repeating-linear-gradient(90deg, #d9d9d9 0 1px, transparent 1px 34px);
}

.slot {
    display: flex;
    align-items: center;
    height: 69px;
}

.bar {
    height: 36px;
    border: 1px solid;
}

.total {
    border-color: #5b8fc6;
    background: linear-gradient(#b0cbe9, #93b6e2);
}

.delayed {
    border-color: #d08040;
    background: linear-gradient(#f7bda4, #f5a380);
}

.finished {
    border-color: #6ba850;
    background: linear-gradient(#b5d5a7, #98c581);
}

/* scroll bar */
.vscroll {
    display: flex;
    flex-direction: column;
    flex: none;
    width: 21px;
    padding: 2px 3px 0;
}

.vscroll button {
    height: 15px;
    border: 1px solid #999;
    background: #fff;
}

.track {
    flex: 1;
    background: #f1f1f1;
}

.thumb {
    height: 59%;
    border: 1px solid #999;
    background: #fff;
}
```
